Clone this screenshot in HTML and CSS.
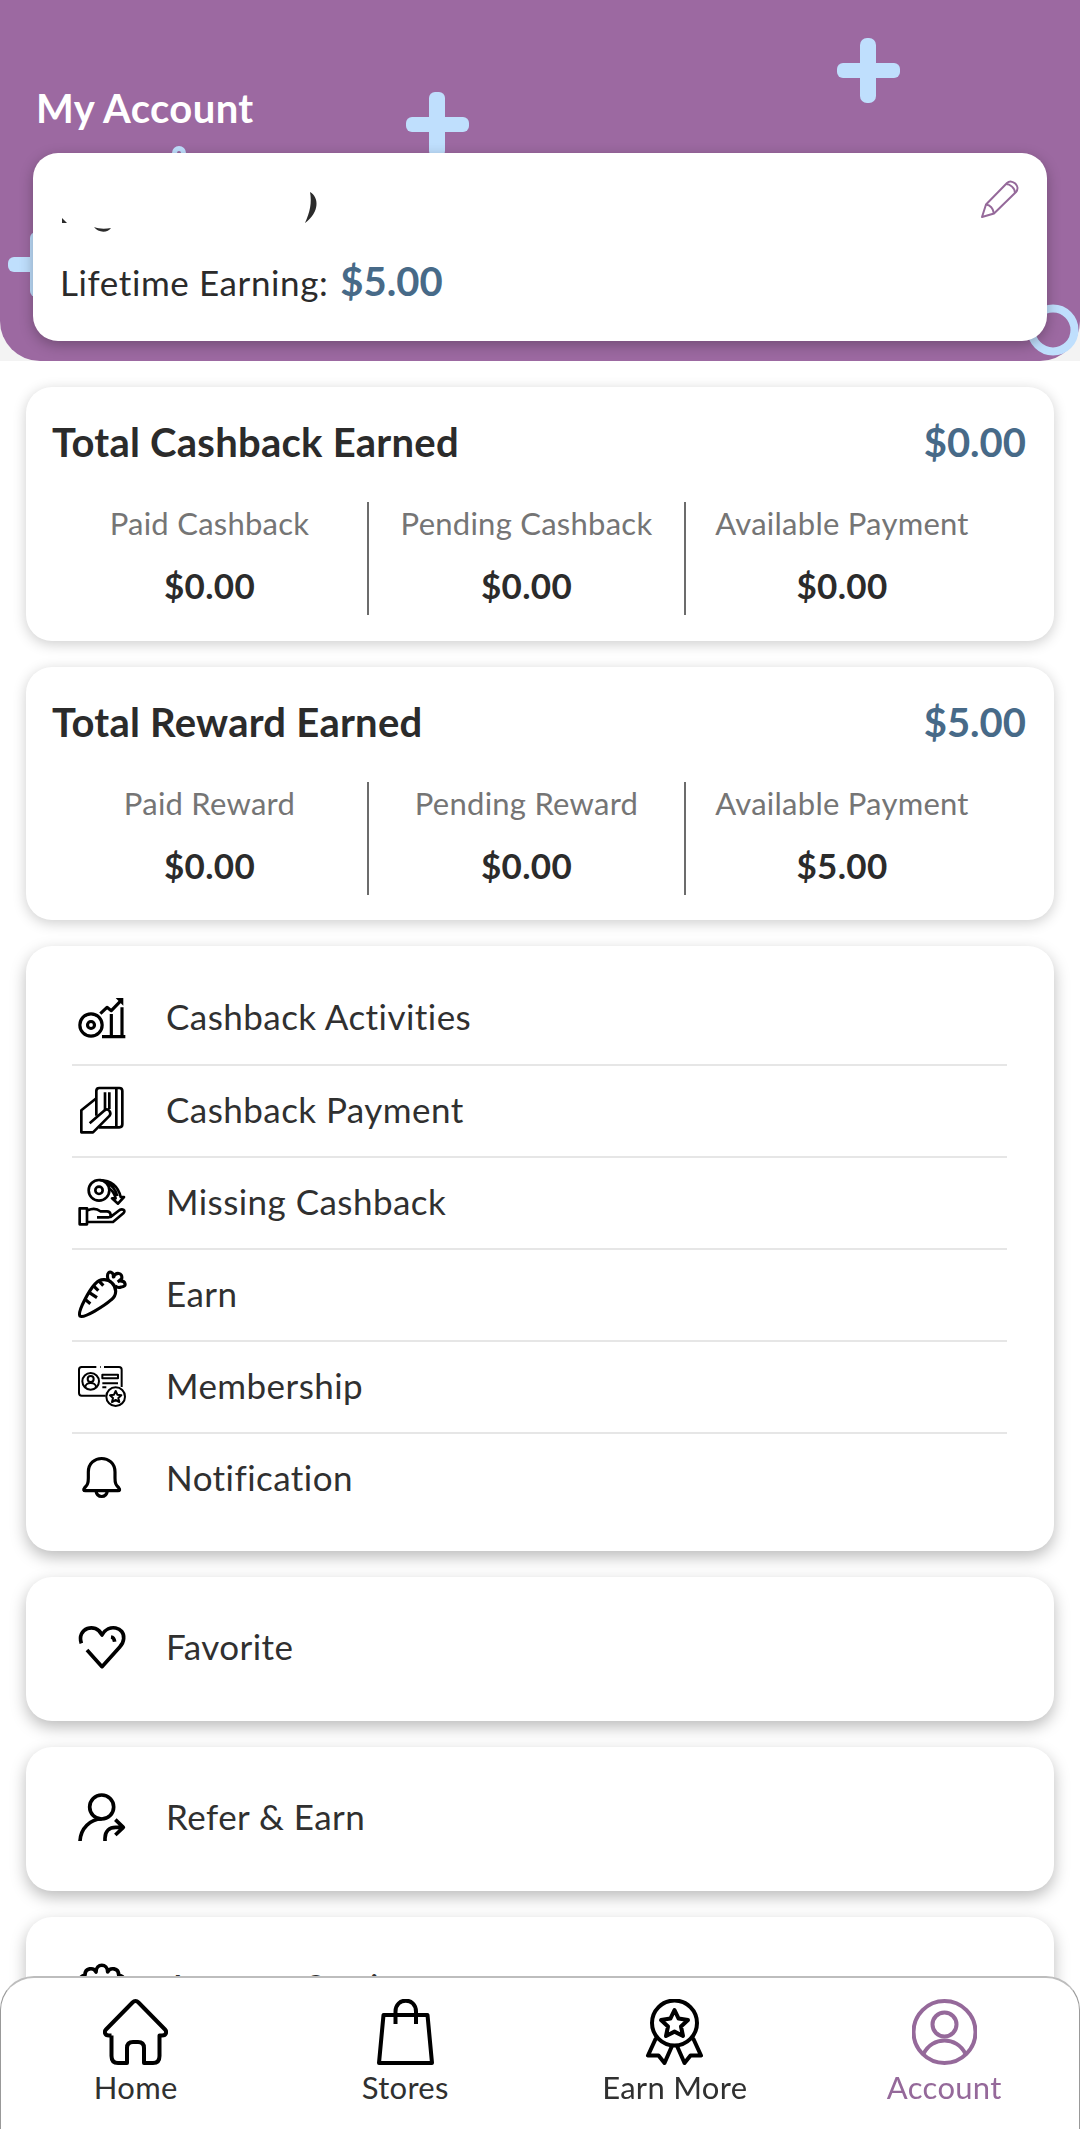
FILE: index.html
```html
<!DOCTYPE html>
<html lang="en">
<head>
  <meta charset="UTF-8">
  <meta name="viewport" content="width=device-width, initial-scale=1.0">
  <title>My Account</title>
  <link rel="stylesheet" href="styles.css">
</head>
<body>
  <div class="header-wrap">
    <header class="header">
      <!-- header decoration -->
      <svg class="decor" viewBox="0 0 1080 361">
        <g fill="#bfdffd">
          <rect x="406" y="117" width="63" height="15" rx="6"/>
          <rect x="429" y="92" width="16" height="65" rx="6"/>
          <rect x="837" y="63" width="63" height="15" rx="6"/>
          <rect x="860" y="38" width="16" height="65" rx="7"/>
          <rect x="8" y="257" width="63" height="15" rx="6"/>
          <rect x="30" y="232" width="16" height="65" rx="6"/>
        </g>
        <circle cx="179" cy="153" r="4.500" fill="none" stroke="#bfdffd" stroke-width="5"/>
      </svg>
      <h1 class="title">My Account</h1>
    </header>
    <svg class="decor-ring" viewBox="0 0 54 54"><circle cx="27" cy="27" r="21.500" fill="none" stroke="#bfdffd" stroke-width="8"/></svg>

    <section class="profile">
      <div class="profile-top">
        <svg class="name" viewBox="0 0 260 44" fill="#2b2b2b">
          <path d="M0 27l5 5H0z"/>
          <path d="M32 36c5 2 11 2 17 1c-3 5-13 5-17-1z"/>
          <path d="M248 1c9 5 10 20-5 31c5-11 7-20 5-31z"/>
        </svg>
        <svg class="edit" viewBox="0 0 38 38" fill="none" stroke="#95699a" stroke-width="2" stroke-linejoin="round">
          <path d="M1 37L5 24.500L26 3C31 -1.500 40 6 35 12L13 33.500Z"/>
          <path d="M5 24.500C9 25 12 28 13 33.500M25 4C29 4 34 8 34 13"/>
        </svg>
      </div>
      <p class="lifetime">Lifetime Earning: <span class="amount">$5.00</span></p>
    </section>
  </div>

  <main class="content">
    <section class="card summary">
      <div class="summary-head">
        <h2>Total Cashback Earned</h2>
        <span class="amount">$0.00</span>
      </div>
      <div class="stats">
        <div class="stat"><span class="label">Paid Cashback</span><b>$0.00</b></div>
        <div class="stat"><span class="label">Pending Cashback</span><b>$0.00</b></div>
        <div class="stat"><span class="label">Available Payment</span><b>$0.00</b></div>
      </div>
    </section>

    <section class="card summary">
      <div class="summary-head">
        <h2>Total Reward Earned</h2>
        <span class="amount">$5.00</span>
      </div>
      <div class="stats">
        <div class="stat"><span class="label">Paid Reward</span><b>$0.00</b></div>
        <div class="stat"><span class="label">Pending Reward</span><b>$0.00</b></div>
        <div class="stat"><span class="label">Available Payment</span><b>$5.00</b></div>
      </div>
    </section>

    <section class="card menu">
      <a class="row">
        <svg class="icon" viewBox="0 0 150 150">
          <circle cx="42" cy="99" r="33.500"/>
          <circle cx="42" cy="99" r="10.500"/>
          <path d="M75 134H145M103 66V134M135 46V134M70 65L90 46L103 56L132 26"/>
          <path class="solid" d="M116 18H139V41Z"/>
        </svg>
        <span>Cashback Activities</span>
      </a>
      <a class="row">
        <svg class="icon thin" viewBox="0 0 150 150">
          <path d="M58 92V18Q58 9 67 9H127Q136 9 136 18V118Q136 127 127 127H66M118 9V127M84 22V74M97 22V72"/>
          <path d="M58 40L13 76V142H48L98 92C104 82 94 68 83 76L38 115"/>
        </svg>
        <span>Cashback Payment</span>
      </a>
      <a class="row">
        <svg class="icon thin" viewBox="0 0 150 150">
          <circle cx="66" cy="40" r="31"/>
          <circle cx="66" cy="40" r="11"/>
          <path d="M68 9C105 10 124 30 131 60H141L123 80L105 64H116C112 50 106 40 97 35M88 17C105 25 116 38 121 57"/>
          <path d="M8 94H30V142H8ZM32 100C46 94 58 93 70 103H90C102 103 105 121 94 121H60M99 121L128 99C136 94 148 100 139 109L108 135H32"/>
        </svg>
        <span>Missing Cashback</span>
      </a>
      <a class="row">
        <svg class="icon" viewBox="0 0 150 150">
          <path d="M9 141C0 128 38 62 55 44C68 28 93 28 105 42C120 56 120 79 103 92C84 109 20 150 9 141Z"/>
          <path d="M49 50L64 65M65 35L79 50M36 70L60 86M24 91L40 104"/>
          <path d="M94 34C86 10 100 2 109 16V24C116 8 138 10 134 29L126 36C148 34 150 54 133 54C125 57 119 55 115 50M110 18V27M133 31L122 39"/>
        </svg>
        <span>Earn</span>
      </a>
      <a class="row">
        <svg class="icon fine" viewBox="0 0 150 150">
          <path d="M58 18H14Q6 18 6 26V96Q6 104 14 104H86M81 18H126Q134 18 134 26V78M69 18H71"/>
          <circle cx="41" cy="61" r="25"/>
          <circle cx="41" cy="54" r="9"/>
          <path d="M25 78C25 62 57 62 57 78M76 41H123V52H76ZM76 67H123M76 79H88"/>
          <circle cx="116" cy="107" r="28"/>
          <path d="M116 90L121 101L133 103L124 111L127 123L116 117L105 123L108 111L99 103L111 101Z"/>
        </svg>
        <span>Membership</span>
      </a>
      <a class="row">
        <svg class="icon" viewBox="0 0 150 150">
          <path d="M34 57C34 3 114 3 114 57V75C114 94 118 96 125 104C130 110 128 113 123 113H25C20 113 18 110 23 104C30 96 34 94 34 75Z"/>
          <path d="M57 114C60 136 88 136 91 114"/>
        </svg>
        <span>Notification</span>
      </a>
    </section>

    <section class="card single">
      <a class="row">
        <svg class="icon bold" viewBox="0 0 150 150">
          <path d="M13 61C-2 16 56 -4 75 36C94 0 144 12 140 47C139 58 136 64 129 71L75 131L30 81"/>
          <path d="M102 42Q111 43 113 56"/>
        </svg>
        <span>Favorite</span>
      </a>
    </section>

    <section class="card single">
      <a class="row">
        <svg class="icon bold" viewBox="0 0 150 150">
          <circle cx="74" cy="42" r="36"/>
          <path d="M9 144C11 106 40 78 74 78M84 144V136C84 114 98 103 116 103H139M115 80L139 103L115 126"/>
        </svg>
        <span>Refer &amp; Earn</span>
      </a>
    </section>

    <section class="card single">
      <a class="row">
        <svg class="icon bold" viewBox="0 0 150 150">
          <path d="M24 36C24 14 50 12 57 27C57 0 92 0 92 27C99 12 125 14 125 36C146 40 146 62 130 74C146 88 140 112 118 112C114 136 90 140 75 124C60 140 36 136 32 112C10 112 4 88 20 74C4 62 4 40 24 36Z"/>
        </svg>
        <span>Account Settings</span>
      </a>
    </section>
  </main>

  <nav class="tabbar">
    <a class="tab">
      <svg viewBox="0 0 65 66">
        <path d="M8.500 36.500H6C1.500 36.500 1 32.500 3 30.500L29.500 3.500Q32.500 0.500 35.500 3.500L62 30.500C64 32.500 63.500 36.500 59 36.500H56.500V57Q56.500 64 50 64H41V49Q41 43 35 43H30Q24 43 24 49V64H15Q8.500 64 8.500 57V36.500"/>
      </svg>
      <span>Home</span>
    </a>
    <a class="tab">
      <svg viewBox="0 0 65 66">
        <path d="M10.500 16H54.500L59 64H6Z"/>
        <path d="M22.500 25V12.500C22.500 -2 43 -2 43 12.500V25"/>
      </svg>
      <span>Stores</span>
    </a>
    <a class="tab">
      <svg viewBox="0 0 65 66">
        <circle cx="32.500" cy="24" r="22.500"/>
        <path d="M32.500 11L36.600 19.600L46 21L39 27.500L41 37L32.500 32.600L24 37L26 27.500L19 21L28.400 19.600Z"/>
        <path d="M14 39L6 56.500H16.500L22.500 64L30 47M51 39L59 56.500H48.500L42.500 64L35 47"/>
      </svg>
      <span>Earn More</span>
    </a>
    <a class="tab active">
      <svg viewBox="0 0 65 66">
        <circle cx="32.500" cy="33" r="31"/>
        <circle cx="32.500" cy="25.500" r="12"/>
        <path d="M11.500 55C20 37 45 37 53.500 55"/>
      </svg>
      <span>Account</span>
    </a>
  </nav>
</body>
</html>
```
FILE: styles.css
```css
* {
  box-sizing: border-box;
}

body {
  margin: 0;
  height: 2129px;
  overflow: hidden;
  background-color: #fff;
  color: #2b2b2b;
  font-family: Lato, "Open Sans", sans-serif;
}

h1, h2, p {
  margin: 0;
}

/* Header */
.header-wrap {
  position: relative;
  height: 361px;
  background: linear-gradient(#fff 300px, #f3f3f3 300px);
}

.header {
  position: relative;
  height: 361px;
  padding: 84px 36px 0;
  overflow: hidden;
  border-radius: 0 0 40px 40px;
  background-color: #9c69a1;
}

.decor {
  position: absolute;
  top: 0;
  left: 0;
  width: 1080px;
  height: 361px;
}

.decor-ring {
  position: absolute;
  top: 303px;
  right: 0;
  width: 54px;
  height: 54px;
}

.title {
  position: relative;
  color: #fff;
  font-size: 40px;
  line-height: 48px;
  letter-spacing: 0.4px;
}

.profile {
  position: absolute;
  top: 153px;
  left: 33px;
  width: 1014px;
  height: 188px;
  padding: 27px 28px 0 27px;
  border-radius: 25px;
  background-color: #fff;
  box-shadow: 0 4px 14px rgba(0, 0, 0, 0.28);
}

.profile-top {
  display: flex;
  justify-content: space-between;
  align-items: flex-start;
  height: 77px;
}

.name {
  width: 260px;
  height: 44px;
  margin: 11px 0 0 2px;
}

.edit {
  width: 38px;
  height: 38px;
}

.lifetime {
  display: flex;
  align-items: baseline;
  gap: 12px;
  font-size: 35px;
  line-height: 48px;
  letter-spacing: 0.6px;
}

.amount {
  color: #476a88;
  font-size: 40px;
  font-weight: bold;
  letter-spacing: 0;
}

/* Cards */
.content {
  display: flex;
  flex-direction: column;
  gap: 26px;
  padding: 26px 26px 0;
}

.card {
  flex: none;
  border-radius: 26px;
  background-color: #fff;
  box-shadow: 0 3px 14px rgba(0, 0, 0, 0.2);
}

.summary {
  height: 253.500px;
  padding: 31px 28px 0 26px;
}

.summary-head {
  display: flex;
  justify-content: space-between;
  line-height: 48px;
}

.summary-head h2 {
  font-size: 40px;
  letter-spacing: 0.25px;
}

.stats {
  display: grid;
  grid-template-columns: repeat(3, 317px);
  margin-top: 36px;
}

.stat {
  display: flex;
  flex-direction: column;
  align-items: center;
  gap: 20px;
  height: 113px;
  padding-top: 2px;
  border-right: 2px solid #6c6c6c;
}

.stat:last-child {
  border-right: none;
  padding-right: 5px;
}

.stat .label {
  color: #757575;
  font-size: 31px;
  line-height: 38px;
  letter-spacing: 0.25px;
}

.stat b {
  font-size: 35px;
  line-height: 46px;
  letter-spacing: 0.3px;
}

/* Menu */
.menu,
.single {
  padding: 26px 47px 26px 46px;
  box-shadow: 0 6px 16px rgba(0, 0, 0, 0.27);
}

.menu {
  height: 604.500px;
}

.single {
  height: 144px;
}

.row {
  display: flex;
  align-items: center;
  gap: 39px;
  height: 92px;
  padding: 0 0 2px 5px;
  font-size: 35px;
  letter-spacing: 0.45px;
  color: #303030;
}

.row span {
  padding-bottom: 3px;
}

.row + .row {
  border-top: 2px solid #e6e6e6;
}

.icon {
  width: 50px;
  height: 50px;
  fill: none;
  stroke: #000;
  stroke-width: 9.500;
  stroke-linejoin: round;
}

.icon.bold {
  stroke-width: 11;
}

.icon.thin {
  stroke-width: 8;
}

.icon.fine {
  stroke-width: 6;
}

.icon .solid {
  fill: #000;
  stroke: none;
}

/* Bottom tabs */
.tabbar {
  position: fixed;
  bottom: 0;
  left: 0;
  display: grid;
  grid-template-columns: repeat(4, 269.500px);
  width: 1080px;
  height: 153px;
  padding-top: 21px;
  border: 1px solid #999;
  border-top: 2px solid #bdbdbd;
  border-bottom: none;
  border-radius: 34px 34px 0 0;
  background-color: #fff;
}

.tab {
  display: flex;
  flex-direction: column;
  align-items: center;
  gap: 3px;
  color: #303030;
  font-size: 31px;
  line-height: 38px;
  letter-spacing: 0.3px;
}

.tab svg {
  width: 65px;
  height: 66px;
  fill: none;
  stroke: #000;
  stroke-width: 4;
  stroke-linejoin: round;
}

.tab.active {
  color: #95699a;
}

.tab.active svg {
  stroke: #95699a;
}
```
